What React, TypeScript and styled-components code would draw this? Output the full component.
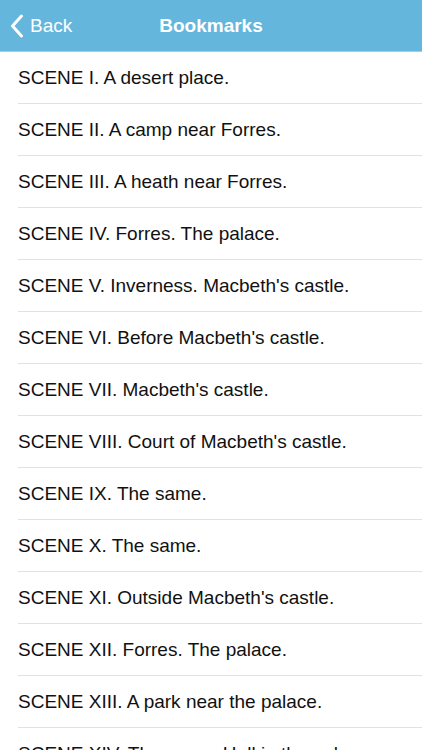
import {ReactElement} from "react";
import styled, {createGlobalStyle} from "styled-components";

const scenes = [
  "SCENE I. A desert place.",
  "SCENE II. A camp near Forres.",
  "SCENE III. A heath near Forres.",
  "SCENE IV. Forres. The palace.",
  "SCENE V. Inverness. Macbeth's castle.",
  "SCENE VI. Before Macbeth's castle.",
  "SCENE VII. Macbeth's castle.",
  "SCENE VIII. Court of Macbeth's castle.",
  "SCENE IX. The same.",
  "SCENE X. The same.",
  "SCENE XI. Outside Macbeth's castle.",
  "SCENE XII. Forres. The palace.",
  "SCENE XIII. A park near the palace.",
  "SCENE XIV. The same. Hall in the palace.",
];

export default function App(): ReactElement {
  return (
    <Page>
      <GlobalStyle/>
      <NavBar>
        <BackButton>
          <svg width="14" height="24" viewBox="0 0 14 24">
            <path d="M11.5 2 L2.5 12 L11.5 22" fill="none" stroke="#fff" strokeWidth="3" strokeLinecap="round" strokeLinejoin="round"/>
          </svg>
          <span>Back</span>
        </BackButton>
        <Title>Bookmarks</Title>
      </NavBar>
      <List>
        {scenes.map((s) => (
          <Row key={s}>
            <RowText>{s}</RowText>
          </Row>
        ))}
      </List>
    </Page>
  )
}

const GlobalStyle = createGlobalStyle`
  html, body {
    margin: 0;
    padding: 0;
    background: #fff;
    overflow: hidden;
  }
  body {
    font-family: "Liberation Sans", Arial, sans-serif;
  }
`

const Page = styled.div`
  width: 422px;
  height: 750px;
  overflow: hidden;
  display: flex;
  flex-direction: column;
`

const NavBar = styled.div`
  height: 52px;
  flex-shrink: 0;
  background: #65b6dd;
  border-bottom: 1px solid #9fd0e8;
  box-sizing: border-box;
  position: relative;
  display: flex;
  align-items: center;
  justify-content: center;
`

const BackButton = styled.div`
  position: absolute;
  left: 10px;
  top: 0;
  bottom: 0;
  display: flex;
  align-items: center;
  gap: 6px;
  color: #fff;
  font-size: 19px;
`

const Title = styled.div`
  color: #fff;
  font-size: 19px;
  font-weight: bold;
`

const List = styled.div`
  display: flex;
  flex-direction: column;
`

const Row = styled.div`
  height: 52px;
  flex-shrink: 0;
  margin-left: 18px;
  border-bottom: 1px solid #e1e1e1;
  box-sizing: border-box;
  display: flex;
  align-items: center;
`

const RowText = styled.div`
  font-size: 19px;
  color: #111;
  padding-top: 1px;
`
